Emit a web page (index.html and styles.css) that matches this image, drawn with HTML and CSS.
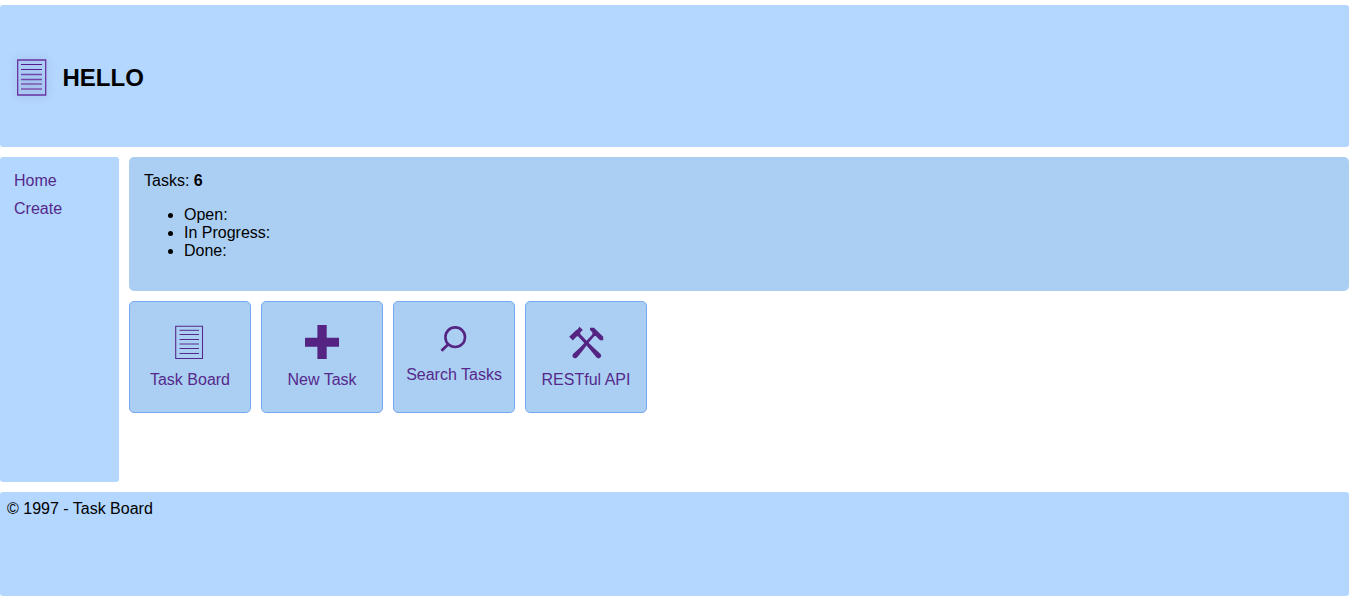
FILE: index.html
```html
<!DOCTYPE html>
<html lang="en">
<head>
<meta charset="utf-8">
<title>Task Board</title>
<link rel="stylesheet" href="styles.css">
</head>
<body>
<div class="page">
  <header class="header">
    <a class="logo" href="#"><svg width="30" height="37" viewBox="0 0 30 37">
      <path d="M.7 1h28v35H.7z" fill="none" stroke="#6a31a0" stroke-width="1.3"/>
      <path d="M4 5.5h21M4 10.5h21" stroke="#551a8b"/>
      <path d="M4 15.5h21M4 20.5h21" stroke="#6f46ac" stroke-width="1.3"/>
      <path d="M4 25h21M4 30h21" stroke="#8770be" stroke-width="2"/>
    </svg></a>
    <h1 class="title">HELLO</h1>
  </header>
  <div class="body">
    <nav class="sidebar">
      <a href="#">Home</a>
      <a href="#">Create</a>
    </nav>
    <main class="main">
      <section class="summary">
        <div>Tasks: <b>6</b></div>
        <ul class="states"><li>Open:</li><li>In Progress:</li><li>Done:</li></ul>
      </section>
      <div class="cards">
        <a class="card" href="#"><svg class="icon" width="36" height="36" viewBox="0 0 36 36">
          <path d="M3.7 1.3h26.8v32.2H3.7z" fill="none" stroke="#55298b" stroke-width="1.1"/>
          <path d="M7.5 5.3h19.5M7.5 9.5h19.5M7.5 14.5h19.5M7.5 23.5h19.5M7.5 28.5h19.5" stroke="#55298b"/>
          <path d="M7.5 19h19.5" stroke="#807cbd" stroke-width="2"/>
        </svg><span>Task Board</span></a>
        <a class="card" href="#"><svg class="icon" width="36" height="36" viewBox="0 0 36 36">
          <path d="M13.4 0h9.3v12.7H35v9H22.7V34h-9.3V21.7H1v-9h12.4z" fill="#552483"/>
        </svg><span>New Task</span></a>
        <a class="card" href="#"><svg class="icon icon-short" width="36" height="31" viewBox="0 0 36 31">
          <circle cx="19.2" cy="12.2" r="9.8" fill="none" stroke="#552483" stroke-width="2.6"/>
          <path d="M12.5 19 5.5 25.8" stroke="#552483" stroke-width="2.8"/>
        </svg><span>Search Tasks</span></a>
        <a class="card" href="#"><svg class="icon" width="36" height="36" viewBox="0 0 36 36">
          <g fill="#552483">
            <path d="M1.2 11.8 8.2 5 9.3 4.8 11.5 1.8 14.8 5 12.4 7.2 12.2 9 19.6 16.8 26 23 32.6 29Q34 31 32.4 32.6 30.6 34.2 28.6 32.6L22.8 25.4 17.2 19 10 11.2 8.6 11.4 4.8 15.6z"/>
            <path d="M22 2.8H26L35.2 11.8V15.3H32L27.8 11 26.2 11.2 20 18.6 14.8 25.4 9 32.6Q7 34.2 5.2 32.6 3.6 31 5 29L11.6 23 17.8 16.5 24.4 9.4 24.3 7.2 22 5z"/>
          </g>
        </svg><span>RESTful API</span></a>
      </div>
    </main>
  </div>
  <footer class="footer">© 1997 - Task Board</footer>
</div>
</body>
</html>
```
FILE: styles.css
```css
* { box-sizing: border-box; }
body {
  margin: 0;
  background: #fff;
  color: #000;
  font: 16px/18px "Liberation Sans", Arial, sans-serif;
}
a { color: #55298b; text-decoration: none; }
.page {
  display: flex;
  flex-direction: column;
  gap: 10px;
  height: 601px;
  padding: 5px 3px 5px 0;
}
.header, .sidebar, .footer { background: #b3d7ff; border-radius: 3px; }
.header {
  display: flex;
  align-items: center;
  gap: 15.5px;
  height: 142px;
  padding: 3px 0 0 17px;
}
.logo svg { display: block; filter: drop-shadow(0 0 4px rgba(80, 80, 130, .4)); }
.title { margin: 0; font-size: 24px; line-height: 28px; }
.body { display: flex; gap: 10px; height: 325px; }
.sidebar {
  display: flex;
  flex-direction: column;
  gap: 10px;
  width: 119px;
  padding: 15px 14px;
}
.main { flex: 1; }
.summary {
  height: 134px;
  padding: 15px;
  background: #abcff3;
  border-radius: 5px;
}
.states { margin: 16px 0; padding-left: 40px; }
.cards { display: flex; gap: 10px; margin-top: 10px; }
.card {
  display: flex;
  flex-direction: column;
  align-items: center;
  width: 122px;
  height: 112px;
  padding-top: 23px;
  background: #abcff3;
  border: 1px solid #77a7ee;
  border-radius: 5px;
}
.icon { margin-bottom: 10px; }
.footer { height: 104px; padding: 8px 7px; }
```
